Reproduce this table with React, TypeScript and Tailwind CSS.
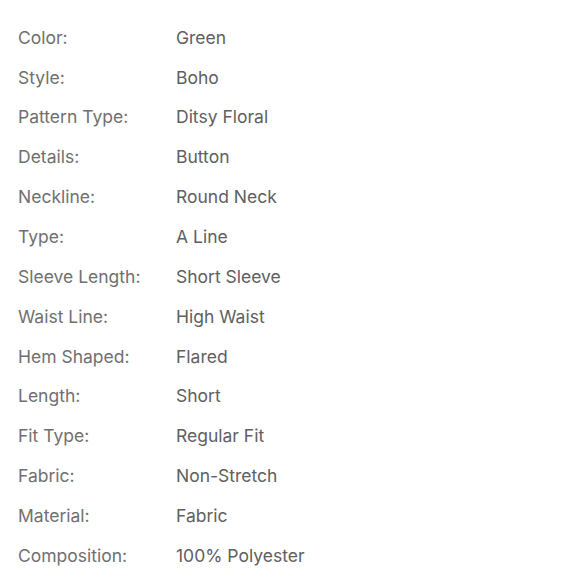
import React from "react";

const rows: [string, string][] = [
  ["Color:", "Green"],
  ["Style:", "Boho"],
  ["Pattern Type:", "Ditsy Floral"],
  ["Details:", "Button"],
  ["Neckline:", "Round Neck"],
  ["Type:", "A Line"],
  ["Sleeve Length:", "Short Sleeve"],
  ["Waist Line:", "High Waist"],
  ["Hem Shaped:", "Flared"],
  ["Length:", "Short"],
  ["Fit Type:", "Regular Fit"],
  ["Fabric:", "Non-Stretch"],
  ["Material:", "Fabric"],
  ["Composition:", "100% Polyester"],
];

export default function App() {
  return (
    <div
      className="w-[580px] h-[580px] bg-white pt-[18px] pl-[18px]"
      style={{ fontFamily: "Inter, 'Noto Sans', sans-serif" }}
    >
      {rows.map(([k, v]) => (
        <div key={k} className="flex items-center h-[39.85px] text-[17.5px]">
          <div className="w-[158px] text-[#707070]">{k}</div>
          <div className="text-[#606060]">{v}</div>
        </div>
      ))}
    </div>
  );
}
